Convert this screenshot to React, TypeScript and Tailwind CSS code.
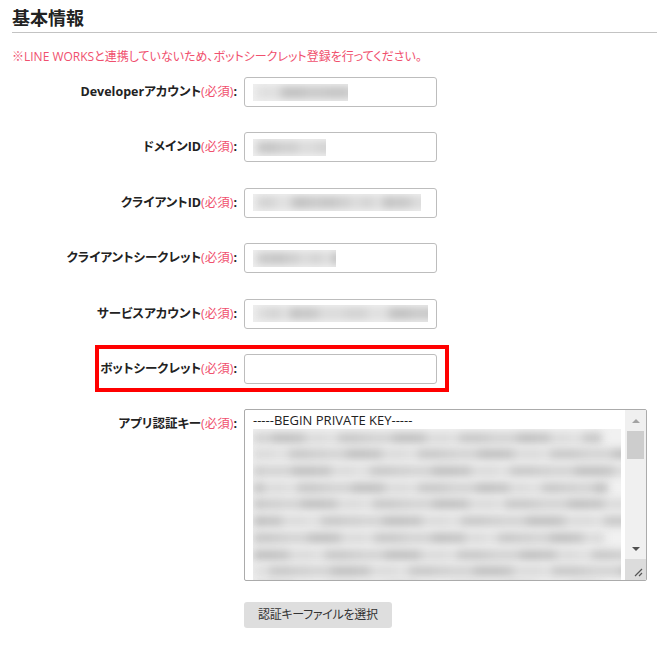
const font = "font-['Open_Sans','Noto_Sans_CJK_JP',sans-serif] [font-feature-settings:'palt']";

type Field = {
  label: string;
  blur?: number;
  highlight?: boolean;
};

const fields: Field[] = [
  { label: "Developerアカウント", blur: 95 },
  { label: "ドメインID", blur: 73 },
  { label: "クライアントID", blur: 168 },
  { label: "クライアントシークレット", blur: 83 },
  { label: "サービスアカウント", blur: 175 },
  { label: "ボットシークレット", highlight: true },
];

// pseudo random tones for the blurred (redacted) values
const tones = ["#cfcfcf", "#c4c4c4", "#d8d8d8", "#bcbcbc", "#cacaca", "#dddddd", "#c0c0c0"];

function Smudge({ width, seed, height = 17 }: { width: number; seed: number; height?: number }) {
  const parts: { w: number; c: string }[] = [];
  let x = 0;
  let i = seed;
  while (x < width + 10) {
    const w = 6 + ((i * 37) % 19);
    parts.push({ w, c: tones[(i * 5) % tones.length] });
    x += w;
    i++;
  }
  return (
    <div className="overflow-hidden bg-[#efefef] flex items-center" style={{ width, height }}>
      <div className="flex items-center h-[11px] blur-[4px] pl-1">
        {parts.map((p, k) => (
          <div key={k} className="h-full shrink-0" style={{ width: p.w, backgroundColor: p.c }} />
        ))}
      </div>
    </div>
  );
}

function Label({ text }: { text: string }) {
  return (
    <div className="w-[225px] shrink-0 text-right text-[12.5px] leading-[18px] font-bold text-[#222]">
      {text}
      <span className="font-normal text-[#f0506e]">(必須)</span>:
    </div>
  );
}

export default function App() {
  return (
    <div className={`${font} bg-white w-[657px] h-[658px] pl-3 pt-[6px]`}>
      <h2 className="text-[18px] leading-[24px] font-bold text-[#222] pb-[2px] border-b border-[#c3c3c3]">
        基本情報
      </h2>
      <p className="mt-[15px] text-[12px] leading-[18px] text-[#f0506e]">
        ※LINE WORKSと連携していないため、ボットシークレット登録を行ってください。
      </p>

      <div className="mt-[11px] flex flex-col gap-y-[25.4px]">
        {fields.map((f, idx) => (
          <div key={f.label} className="relative flex items-center gap-[7px]">
            <Label text={f.label} />
            <div className="w-[193px] h-[30px] shrink-0 border border-[#bdbdbd] rounded-[3px] bg-white flex items-center pl-2">
              {f.blur && <Smudge width={f.blur} seed={idx * 3 + 1} />}
            </div>
            {f.highlight && (
              <div className="absolute left-[83px] -top-[9px] w-[354px] h-[47px] border-4 border-[#ff0000] pointer-events-none" />
            )}
          </div>
        ))}

        {/* private key */}
        <div className="flex items-start gap-[7px]">
          <div className="pt-[6px]">
            <Label text="アプリ認証キー" />
          </div>
          <div className="relative w-[403px] h-[172px] shrink-0 border border-[#ababab] rounded-[2px] bg-white flex overflow-hidden">
            <div className="flex-1 pl-2 pt-[2px] overflow-hidden">
              <div className="text-[13px] leading-[17px] text-[#222] whitespace-nowrap">
                -----BEGIN PRIVATE KEY-----
              </div>
              <div className="w-[368px] h-[160px] overflow-hidden bg-[#f1f1f1] flex flex-col">
                {Array.from({ length: 10 }).map((_, r) => (
                  <div key={r} className="h-[16.7px] shrink-0 flex items-center">
                    <div className="flex items-center h-[10px] blur-[4px]">
                      {Array.from({ length: 32 }).map((__, k) => {
                        const v = (r * 13 + k * 7) % 11;
                        return (
                          <div
                            key={k}
                            className="h-full shrink-0"
                            style={{ width: 8 + ((r + k * 3) % 9), backgroundColor: tones[v % tones.length] }}
                          />
                        );
                      })}
                    </div>
                  </div>
                ))}
              </div>
            </div>
            {/* scrollbar */}
            <div className="w-[21px] shrink-0 bg-[#f0f0f0] flex flex-col items-center">
              <div className="h-[21px] flex items-center justify-center">
                <div className="w-0 h-0 border-x-[4px] border-x-transparent border-b-[4px] border-b-[#a3a3a3]" />
              </div>
              <div className="w-[17px] h-[28px] bg-[#cdcdcd]" />
              <div className="flex-1" />
              <div className="h-[21px] flex items-center justify-center">
                <div className="w-0 h-0 border-x-[4px] border-x-transparent border-t-[4px] border-t-[#505050]" />
              </div>
              <div className="h-[21px] w-full bg-[#dcdcdc] flex items-end justify-end p-[3px]">
                <svg width="10" height="10" viewBox="0 0 10 10">
                  <path d="M9 2 L2 9 M9 6 L6 9" stroke="#555" strokeWidth="1.2" />
                </svg>
              </div>
            </div>
          </div>
        </div>
      </div>

      <div className="mt-5 pl-[232px]">
        <button className="h-[26px] px-[14px] rounded-[3px] bg-[#dedede] text-[12px] tracking-[-0.3px] text-[#333]">
          認証キーファイルを選択
        </button>
      </div>
    </div>
  );
}
